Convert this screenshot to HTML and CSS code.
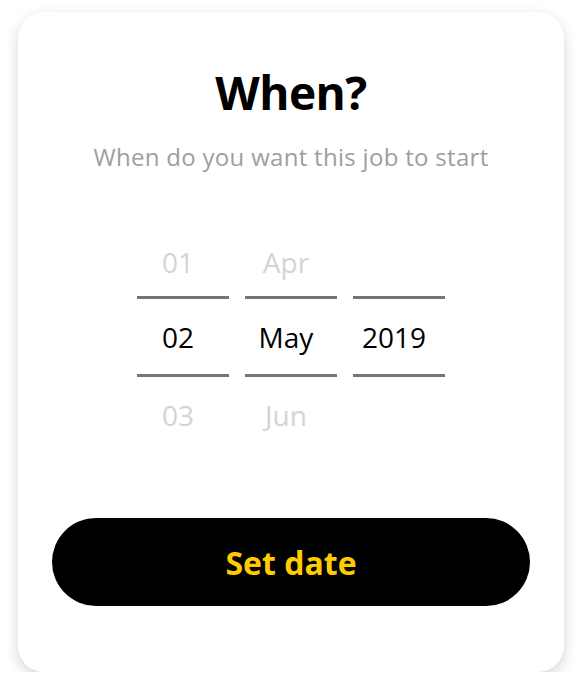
FILE: index.html
```html
<!DOCTYPE html>
<html>
<head>
<meta charset="utf-8">
<link rel="stylesheet" href="styles.css">
</head>
<body>
<div class="card">
  <h1 class="title">When?</h1>
  <p class="subtitle">When do you want this job to start</p>
  <div class="picker">
    <div class="col">
      <div class="cell faded top">01</div>
      <div class="cell selected">02</div>
      <div class="cell faded bottom">03</div>
    </div>
    <div class="col">
      <div class="cell faded top">Apr</div>
      <div class="cell selected">May</div>
      <div class="cell faded bottom">Jun</div>
    </div>
    <div class="col">
      <div class="cell faded top"></div>
      <div class="cell selected">2019</div>
      <div class="cell faded bottom"></div>
    </div>
  </div>
  <button class="btn">Set date</button>
</div>
</body>
</html>
```
FILE: styles.css
```css
html, body {
  margin: 0;
  padding: 0;
  background: #ffffff;
}
body {
  font-family: "Open Sans", "Noto Sans", sans-serif;
  padding: 12px 18px 0 18px;
}
.card {
  width: 546px;
  height: 660px;
  box-sizing: border-box;
  border-radius: 26px;
  background: #fff;
  box-shadow: 0 5px 14px rgba(0, 0, 0, 0.17);
  padding: 50px 34px 0 34px;
  display: flex;
  flex-direction: column;
  align-items: center;
}
.title {
  margin: 0;
  height: 60px;
  line-height: 60px;
  font-size: 46px;
  font-weight: 700;
  color: #000;
  letter-spacing: -0.5px;
}
.subtitle {
  margin: 20px 0 0 0;
  height: 30px;
  line-height: 30px;
  font-size: 24px;
  letter-spacing: 0.3px;
  color: #9e9e9e;
}
.picker {
  margin-top: 56px;
  display: flex;
  gap: 16px;
}
.col {
  width: 92px;
  display: flex;
  flex-direction: column;
}
.cell {
  display: flex;
  align-items: center;
  justify-content: center;
  font-size: 28px;
  padding-right: 10px;
}
.cell.top {
  height: 68px;
}
.cell.bottom {
  height: 76px;
}
.cell.faded {
  color: #d4d4d4;
}
.cell.selected {
  height: 75px;
  color: #000;
  border-top: 3px solid #757575;
  border-bottom: 3px solid #757575;
}
.btn {
  margin-top: 65px;
  width: 478px;
  height: 88px;
  border: none;
  border-radius: 44px;
  background: #000;
  color: #ffcc00;
  font-family: "Open Sans", "Noto Sans", sans-serif;
  font-size: 32px;
  font-weight: 700;
  cursor: pointer;
}
```
